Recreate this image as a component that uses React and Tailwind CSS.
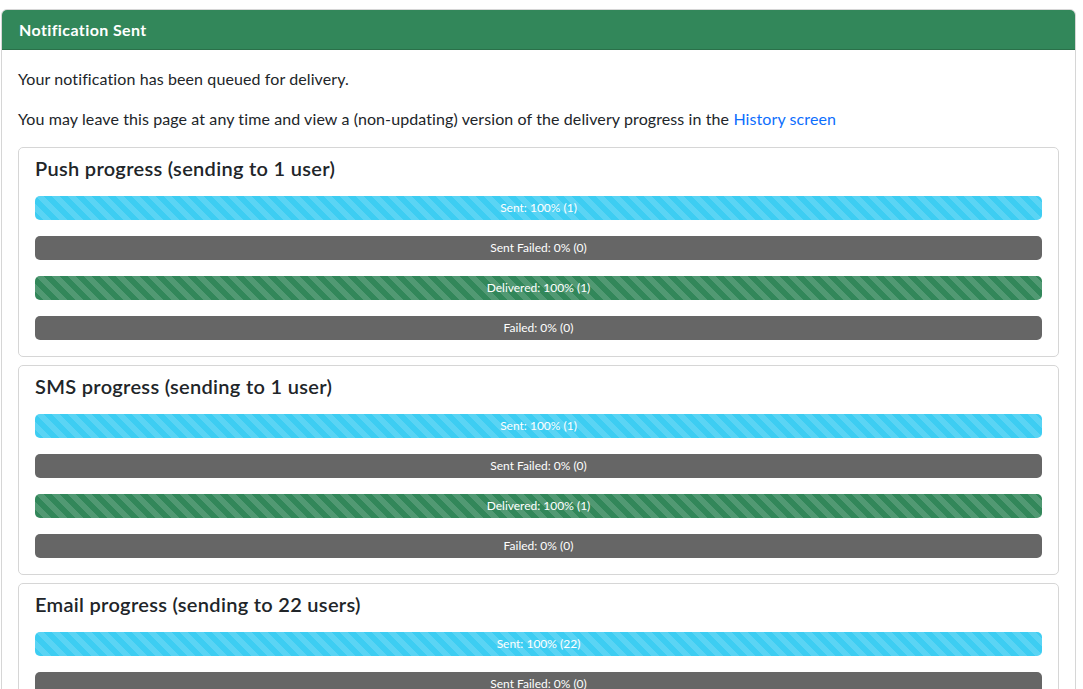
import React from 'react'

const stripes =
  'bg-[linear-gradient(45deg,rgba(255,255,255,.15)_25%,transparent_25%,transparent_50%,rgba(255,255,255,.15)_50%,rgba(255,255,255,.15)_75%,transparent_75%,transparent)] bg-size-[16px_16px]'

const Bar = ({ label, tone }) => {
  const tones = {
    info: `bg-[#3dcdf2] ${stripes}`,
    success: `bg-[#32875a] ${stripes}`,
    grey: 'bg-[#666666]',
  }
  return (
    <div className={`h-6 rounded-[5px] flex items-center justify-center text-white text-[12px] leading-6 ${tones[tone]}`}>
      {label}
    </div>
  )
}

const ProgressCard = ({ title, count }) => (
  <div className="border border-[#d6d6d6] rounded-[5px] px-4 pt-2 pb-4">
    <h5 className="text-[20px] leading-6 font-semibold tracking-[0.3px] text-[#212529] mb-4">{title}</h5>
    <div className="flex flex-col gap-4">
      <Bar tone="info" label={`Sent: 100% (${count})`} />
      <Bar tone="grey" label="Sent Failed: 0% (0)" />
      <Bar tone="success" label={`Delivered: 100% (${count})`} />
      <Bar tone="grey" label="Failed: 0% (0)" />
    </div>
  </div>
)

export default function App() {
  return (
    <div className="min-h-screen bg-white pt-[9px] pl-px pr-[7px] font-['Lato',sans-serif] text-[#212529]">
      <div className="border border-[#d6d6d6] rounded-md overflow-hidden">
        {/* Header */}
        <div className="bg-[#32875a] h-10 flex items-center px-[17px] text-white font-bold text-[16px] tracking-[0.4px] border-b border-[#2a7049]">
          Notification Sent
        </div>

        {/* Body */}
        <div className="px-4 pt-[17px] tracking-[0.1px]">
          <p className="text-[16px] leading-6 mb-4">Your notification has been queued for delivery.</p>
          <p className="text-[16px] leading-6 mb-4">
            You may leave this page at any time and view a (non-updating) version of the delivery progress in the{' '}
            <a href="#" className="text-[#0d6efd]">History screen</a>
          </p>
          <div className="flex flex-col gap-2 tracking-normal">
            <ProgressCard title="Push progress (sending to 1 user)" count={1} />
            <ProgressCard title="SMS progress (sending to 1 user)" count={1} />
            <ProgressCard title="Email progress (sending to 22 users)" count={22} />
          </div>
        </div>
      </div>
    </div>
  )
}
